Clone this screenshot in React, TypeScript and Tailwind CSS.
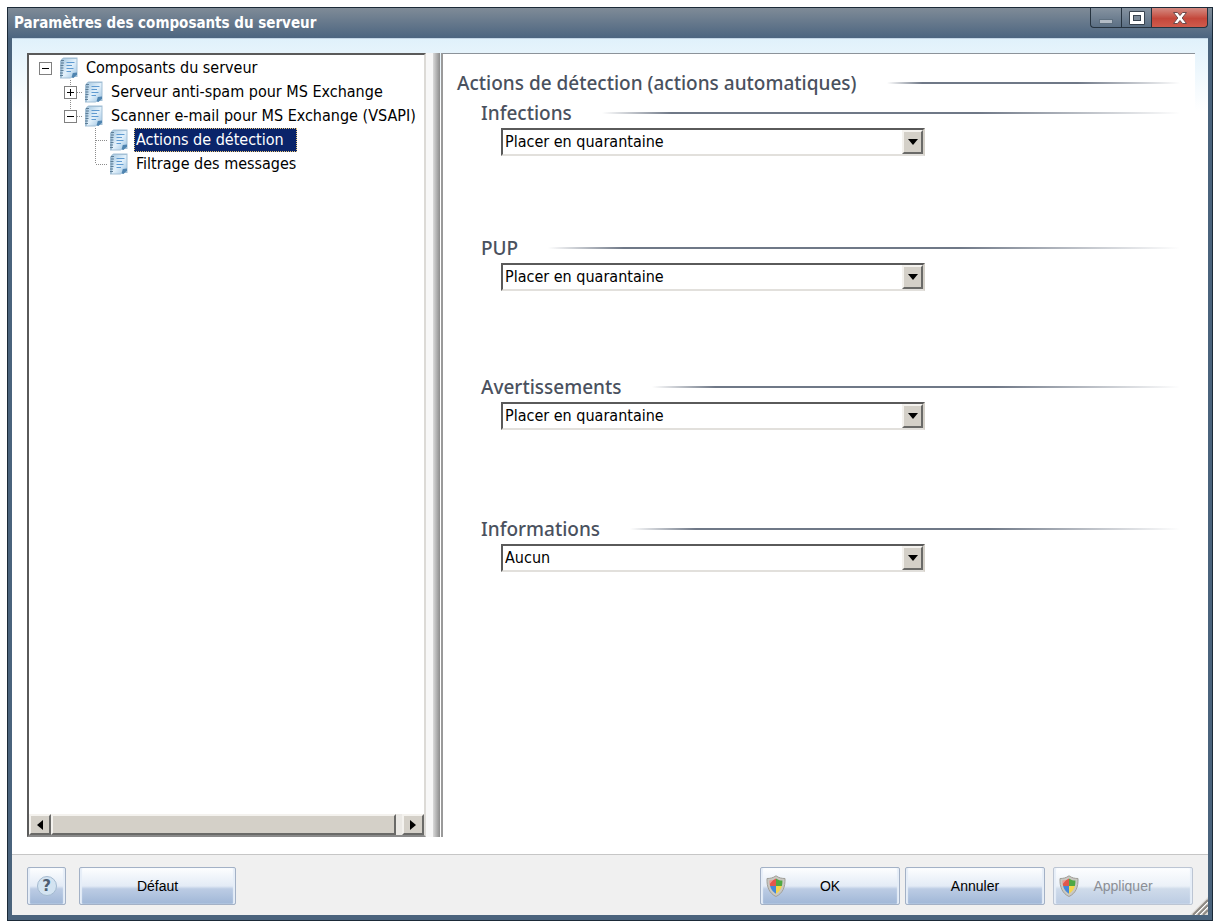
import { useState } from "react";
import type { ReactNode } from "react";
import clsx from "clsx";

type Branch = "none" | "root" | "middle" | "last" | "leaf" | "lastLeaf";

type TreeNode = { label: string; depth: number; branch: Branch; expanded?: boolean };

const NODES: TreeNode[] = [
  { label: "Composants du serveur", depth: 0, branch: "root", expanded: true },
  { label: "Serveur anti-spam pour MS Exchange", depth: 1, branch: "middle", expanded: false },
  { label: "Scanner e-mail pour MS Exchange (VSAPI)", depth: 1, branch: "last", expanded: true },
  { label: "Actions de détection", depth: 2, branch: "leaf" },
  { label: "Filtrage des messages", depth: 2, branch: "lastLeaf" },
];

const ACTIONS = ["Aucun", "Placer en quarantaine", "Supprimer"];

const SECTIONS = [
  { id: "infections", title: "Infections", value: "Placer en quarantaine", space: "mb-[77px]" },
  { id: "pup", title: "PUP", value: "Placer en quarantaine", space: "mb-[81px]" },
  { id: "avertissements", title: "Avertissements", value: "Placer en quarantaine", space: "mb-[84px]" },
  { id: "informations", title: "Informations", value: "Aucun", space: "" },
];

const RAISED =
  "bg-[#d4d0c8] border-2 border-t-[#f4f2ee] border-l-[#f4f2ee] border-r-[#6a6a68] border-b-[#6a6a68]";

function NotebookIcon() {
  return (
    <svg width="20" height="22" viewBox="0 0 20 22" className="block" aria-hidden="true">
      <defs>
        <linearGradient id="page" x1="0" y1="0" x2="1" y2="1">
          <stop offset="0" stopColor="#a9cbe4" />
          <stop offset="0.5" stopColor="#e3f1fb" />
          <stop offset="1" stopColor="#9cc3e2" />
        </linearGradient>
      </defs>
      <path d="M3 1.5 L4.5 0.5 H18.5 V20 H13 L11.5 21.5 H1 V4 Z" fill="#a3c0d6" />
      <path d="M4 2 H17.5 V15.5 L12.5 20.5 H3 Z" fill="url(#page)" />
      <path d="M12.5 20.5 L13.8 16 L18 15.5 V17.5 L14.5 21 Z" fill="#4f84b0" />
      <path d="M7.5 5.5 h8 M7.5 8.5 h5.5 M7.5 11.5 h7 M7.5 14.5 h4.5" stroke="#5f9ad0" strokeWidth="1" />
      <path d="M2 3.5 h3 M2 6 h3 M1.5 8.5 h3 M1.5 11 h3 M1.5 13.5 h3 M1 16 h3 M1 18.5 h3" stroke="#5c7d96" strokeWidth="1.2" />
    </svg>
  );
}

function ShieldIcon() {
  return (
    <svg width="20" height="22" viewBox="0 0 20 22" className="block" aria-hidden="true">
      <defs>
        <clipPath id="shield">
          <path d="M10 3.4 C7.5 5.2 5.6 5.6 3.6 5.6 C3.4 11.5 5.2 16 10 18.8 C14.8 16 16.6 11.5 16.4 5.6 C14.4 5.6 12.5 5.2 10 3.4 Z" />
        </clipPath>
      </defs>
      <path
        d="M10 0.8 C7 3 4 3.5 1 3.5 C0.6 12 3.4 18.5 10 21.5 C16.6 18.5 19.4 12 19 3.5 C16 3.5 13 3 10 0.8 Z"
        fill="#c9c8c2"
        stroke="#a09f99"
        strokeWidth="1"
      />
      <g clipPath="url(#shield)">
        <rect width="10" height="11" fill="#e2574b" />
        <rect x="10" width="10" height="11" fill="#4fa843" />
        <rect y="11" width="10" height="11" fill="#4487d8" />
        <rect x="10" y="11" width="10" height="11" fill="#f6d64a" />
        <path d="M2 3 L9 3 L2 11 Z" fill="#fff" opacity="0.4" />
      </g>
    </svg>
  );
}

function HelpIcon() {
  return (
    <span className="grid size-5 place-items-center rounded-full border border-[#a4bad0] bg-[#d3e3f1] font-['DejaVu_Sans',sans-serif] text-[15px] leading-none font-bold text-[#4d5d72]">
      ?
    </span>
  );
}

// one 25x24 cell of the tree gutter: dotted guides and the expander box
function Gutter({ branch, expanded }: { branch: Branch; expanded?: boolean }) {
  const box = expanded !== undefined;
  return (
    <svg width="25" height="24" viewBox="0 0 25 24" className="block shrink-0" aria-hidden="true">
      <g stroke="#8c8c8c" strokeDasharray="1 1" shapeRendering="crispEdges">
        {branch !== "none" && branch !== "root" && (
          <>
            <path d={branch === "last" || branch === "lastLeaf" ? "M12.5 0V12" : "M12.5 0V24"} />
            <path d="M13 12.5H25" />
          </>
        )}
      </g>
      {box && (
        <g shapeRendering="crispEdges">
          <rect x="6.5" y="6.5" width="12" height="12" fill="#fff" stroke="#808080" />
          <path d="M9 12.5H16" stroke="#000" />
          {!expanded && <path d="M12.5 9V16" stroke="#000" />}
        </g>
      )}
    </svg>
  );
}

function TreeRow({ node, selected, onSelect }: { node: TreeNode; selected: boolean; onSelect: () => void }) {
  return (
    <li
      role="treeitem"
      aria-level={node.depth + 1}
      aria-expanded={node.expanded}
      aria-selected={selected}
      className="flex h-6 items-center"
    >
      {Array.from({ length: node.depth }, (_, i) => (
        <Gutter key={i} branch="none" />
      ))}
      <Gutter branch={node.branch} expanded={node.expanded} />
      <span className="w-[26px] shrink-0 pl-px">
        <NotebookIcon />
      </span>
      <button
        type="button"
        onClick={onSelect}
        className={clsx(
          "h-6 shrink-0 border border-dotted pr-3 pl-px text-left leading-[22px] whitespace-nowrap",
          selected ? "border-[#e8c87a] bg-[#0a246a] text-white" : "border-transparent"
        )}
      >
        {node.label}
      </button>
    </li>
  );
}

function ScrollBar() {
  return (
    <div className="flex h-[21px] bg-[#ebe9e5]">
      <button type="button" aria-label="Défiler à gauche" className={clsx(RAISED, "grid w-[22px] place-items-center")}>
        <svg width="6" height="10" viewBox="0 0 6 10" aria-hidden="true">
          <path d="M6 0V10L0 5Z" />
        </svg>
      </button>
      <div className={clsx(RAISED, "mr-1.5 flex-1")} />
      <button type="button" aria-label="Défiler à droite" className={clsx(RAISED, "grid w-[22px] place-items-center")}>
        <svg width="6" height="10" viewBox="0 0 6 10" aria-hidden="true">
          <path d="M0 0V10L6 5Z" />
        </svg>
      </button>
    </div>
  );
}

function Rule() {
  return (
    <span
      aria-hidden="true"
      className="ml-[30px] h-0.5 flex-1 bg-[linear-gradient(to_right,transparent,#6f7887_12%,#6f7887_65%,transparent)]"
    />
  );
}

function ActionSection({ id, title, value, space }: (typeof SECTIONS)[number]) {
  const [action, setAction] = useState(value);
  return (
    <section className={space}>
      <div className="flex h-[30px] items-center pl-6">
        <h2>
          <label htmlFor={id}>{title}</label>
        </h2>
        <Rule />
      </div>
      <div className="relative ml-11 h-7 w-[424px] max-w-full">
        <select
          id={id}
          value={action}
          onChange={e => setAction(e.target.value)}
          className="block h-full w-full appearance-none border-2 border-t-[#5a5a5a] border-r-[#d4d0c8] border-b-[#e2e0dc] border-l-[#5a5a5a] bg-white pr-6 pl-0.5 font-['DejaVu_Sans_Condensed','DejaVu_Sans',sans-serif] text-base leading-6 font-normal text-black"
        >
          {ACTIONS.map(a => (
            <option key={a}>{a}</option>
          ))}
        </select>
        <span
          aria-hidden="true"
          className={clsx(RAISED, "pointer-events-none absolute inset-y-0.5 right-0.5 grid w-[21px] place-items-center")}
        >
          <svg width="10" height="6" viewBox="0 0 10 6">
            <path d="M0 0H10L5 6Z" />
          </svg>
        </span>
      </div>
    </section>
  );
}

function PushButton({
  children,
  icon,
  className,
  disabled,
  label,
}: {
  children: ReactNode;
  icon?: ReactNode;
  className: string;
  disabled?: boolean;
  label?: string;
}) {
  return (
    <button
      type="button"
      disabled={disabled}
      aria-label={label}
      className={clsx(
        "relative grid h-[38px] place-items-center rounded-xs border border-[#a3b1c6] bg-[linear-gradient(to_bottom,#fdfeff,#e3ebf6_50%,#bccce4_58%,#a0b7d7)] font-['Liberation_Sans',Arial,sans-serif] text-sm text-black shadow-[inset_2px_0_1px_#e6eef8,inset_-2px_0_1px_#e6eef8]",
        "disabled:border-[#bcc5d3] disabled:bg-[linear-gradient(to_bottom,#fdfeff,#ebf1f8_50%,#cfdbea_58%,#bccce3)] disabled:text-[#8b8f96]",
        className
      )}
    >
      {icon && <span className="absolute top-[7px] left-[5px]">{icon}</span>}
      {children}
    </button>
  );
}

function TitleBar() {
  const button = "grid h-5 place-items-center border-b border-l border-[#26333f]";
  return (
    <header className="flex h-[30px] items-start bg-linear-to-b from-[#7f8b97] to-[#4c6580] pl-1.5">
      <h1 className="flex-1 text-[15px] leading-[30px] font-bold text-white">
        Paramètres des composants du serveur
      </h1>
      <div className="mr-1 flex">
        <button type="button" aria-label="Réduire" className={clsx(button, "w-[31px] rounded-bl bg-linear-to-b from-[#8693a0] to-[#5b6f84]")}>
          <svg width="14" height="14" viewBox="0 0 14 14" aria-hidden="true">
            <rect x="0.5" y="8.5" width="13" height="4" fill="#b3bcc6" stroke="#5f7080" />
          </svg>
        </button>
        <button type="button" aria-label="Agrandir" className={clsx(button, "w-[30px] bg-linear-to-b from-[#8693a0] to-[#5b6f84]")}>
          <svg width="16" height="14" viewBox="0 0 16 14" aria-hidden="true">
            <path d="M0.5 0.5H15.5V13.5H0.5Z" fill="#fff" stroke="#38434f" />
            <rect x="4.5" y="4.5" width="7" height="5" fill="#7b8998" stroke="#38434f" />
          </svg>
        </button>
        <button type="button" aria-label="Fermer" className={clsx(button, "w-[57px] rounded-br border-r bg-linear-to-b from-[#d38a82] via-[#c4473b] via-55% to-[#cf5b4c]")}>
          <svg width="16" height="14" viewBox="0 0 16 14" aria-hidden="true">
            <path
              d="M1.5 1.5H5.5L8 4.5L10.5 1.5H14.5L10.2 7L14.5 12.5H10.5L8 9.5L5.5 12.5H1.5L5.8 7Z"
              fill="#fff"
              stroke="#6b4a4c"
            />
          </svg>
        </button>
      </div>
    </header>
  );
}

export default function App() {
  const [selected, setSelected] = useState("Actions de détection");

  return (
    <div className="flex h-screen bg-white pt-[7px] pr-0.5 pb-0.5 pl-[7px] font-['DejaVu_Sans_Condensed','DejaVu_Sans',sans-serif] text-base text-black">
      <div className="flex min-w-0 flex-1 flex-col border border-[#1b2a38] bg-[#4a637c]">
        <TitleBar />
        <div className="mr-1 mb-[5px] ml-1 flex min-h-0 flex-1 flex-col border-t border-[#c3d6e6] bg-white">
          <main className="flex min-h-0 flex-1 bg-linear-to-b from-[#e0f1fb] to-white to-[72px] pt-3.5 pr-[13px] pb-[17px] pl-[15px]">
            <nav
              aria-label="Composants"
              className="flex w-[399px] shrink-0 flex-col border-2 border-t-[#5a5a5a] border-r-[#dcdad6] border-b-[#8a8a8a] border-l-[#5a5a5a] bg-white"
            >
              <ul role="tree" className="flex-1 overflow-hidden pt-px pl-1">
                {NODES.map(n => (
                  <TreeRow key={n.label} node={n} selected={n.label === selected} onSelect={() => setSelected(n.label)} />
                ))}
              </ul>
              <ScrollBar />
            </nav>
            <div className="w-[7px] bg-[#f7f7f7]" />
            <div className="mr-px w-[7px] bg-linear-to-r from-[#dadada] to-[#8c8c8c]" />
            <div className="flex-1 border-t border-l-2 border-t-[#8c939a] border-l-[#9a9a9a] bg-white pt-3.5 pr-[15px] pl-3.5 font-['Noto_Sans',sans-serif] text-[19px] leading-6 font-medium text-[#4a515e]">
              <div className="flex h-[30px] items-center">
                <h2>Actions de détection (actions automatiques)</h2>
                <Rule />
              </div>
              {SECTIONS.map(s => (
                <ActionSection key={s.id} {...s} />
              ))}
            </div>
          </main>
          <footer className="relative flex h-[61px] shrink-0 items-start border-t border-[#c6c6c6] bg-[#f0f0f0] px-[15px] pt-3">
            <PushButton className="w-[39px]" label="Aide">
              <HelpIcon />
            </PushButton>
            <PushButton className="ml-[13px] w-[157px]">Défaut</PushButton>
            <div className="flex-1" />
            <PushButton className="w-[140px]" icon={<ShieldIcon />}>OK</PushButton>
            <PushButton className="mr-2 ml-[5px] w-[140px]">Annuler</PushButton>
            <PushButton className="w-[140px]" icon={<ShieldIcon />} disabled>Appliquer</PushButton>
            <svg width="18" height="18" viewBox="0 0 18 18" className="absolute right-0 bottom-0" aria-hidden="true">
              <path d="M0 18L18 0V18Z" fill="#dddad5" />
              <path d="M3 18L18 3M8 18L18 8M13 18L18 13" stroke="#8d8983" strokeWidth="2" />
              <path d="M5 18L18 5M10 18L18 10" stroke="#fff" strokeWidth="1" />
            </svg>
          </footer>
        </div>
      </div>
    </div>
  );
}
